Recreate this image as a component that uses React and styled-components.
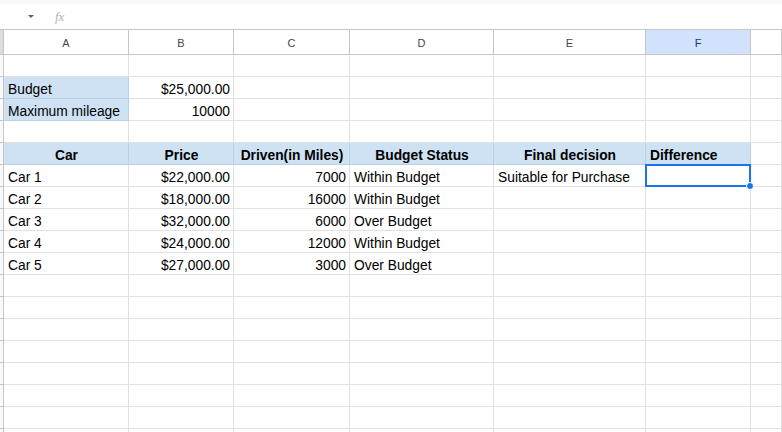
import React from "react";
import styled, { createGlobalStyle } from "styled-components";

// 스프레드시트 화면 (Budget / car list)

const GlobalStyle = createGlobalStyle`
  html, body {
    margin: 0;
    padding: 0;
    background: #ffffff;
    overflow: hidden;
  }
  body {
    font-family: "Liberation Sans", Arial, sans-serif;
  }
`;

const COLS = "4px 125px 105px 116px 144px 152px 105px 1fr";

const Page = styled.div`
  width: 782px;
  height: 432px;
  overflow: hidden;
  background: #fff;
`;

const TopStrip = styled.div`
  height: 4px;
  background: #f8f9fa;
`;

const FormulaBar = styled.div`
  height: 25px;
  display: flex;
  align-items: center;
  border-bottom: 1px solid #c4c7c5;
  padding-left: 28px;
  gap: 21px;
`;

const Caret = styled.div`
  width: 0;
  height: 0;
  border-left: 3px solid transparent;
  border-right: 3px solid transparent;
  border-top: 3px solid #5f6368;
  margin-top: -1px;
`;

const Fx = styled.span`
  font-family: "Liberation Serif", "Times New Roman", serif;
  font-style: italic;
  font-size: 13px;
  color: #b0b3b6;
  margin-top: 1px;
`;

const Row = styled.div`
  display: grid;
  grid-template-columns: ${COLS};
  height: ${(p) => (p.$head ? "25px" : "22px")};
`;

const ColHead = styled.div`
  box-sizing: border-box;
  border-right: 1px solid #c4c7c5;
  border-bottom: 1px solid #c4c7c5;
  background: ${(p) => (p.$active ? "#d3e3fd" : p.$corner ? "#dadce0" : "#fff")};
  color: ${(p) => (p.$active ? "#0b3a8a" : "#444746")};
  font-size: 11px;
  display: flex;
  align-items: center;
  justify-content: center;
  padding-top: 1px;
`;

const RowHead = styled.div`
  box-sizing: border-box;
  border-right: 1px solid #c4c7c5;
  border-bottom: 1px solid #c4c7c5;
  background: #f8f9fa;
`;

const Cell = styled.div`
  position: relative;
  box-sizing: border-box;
  border-right: 1px solid ${(p) => (p.$fill ? "#bcd0e4" : "#e1e1e1")};
  border-bottom: 1px solid ${(p) => (p.$fill ? "#bcd0e4" : "#e1e1e1")};
  background: ${(p) => (p.$fill ? "#cfe2f3" : "#fff")};
  font-size: 13.8px;
  font-weight: ${(p) => (p.$bold ? 700 : 400)};
  color: #000;
  white-space: nowrap;
  overflow: visible;
  display: flex;
  align-items: center;
  justify-content: ${(p) =>
    p.$align === "right" ? "flex-end" : p.$align === "center" ? "center" : "flex-start"};
  padding: 4px 3px 0 4px;
`;

const Selection = styled.div`
  position: absolute;
  z-index: 2;
  left: -1px;
  top: -1px;
  right: -1px;
  bottom: -1px;
  border: 2px solid #1a73e8;
  pointer-events: none;
`;

const Handle = styled.div`
  position: absolute;
  right: -5px;
  bottom: -5px;
  width: 8px;
  height: 8px;
  border-radius: 50%;
  background: #1a73e8;
  border: 1px solid #fff;
  box-sizing: border-box;
`;

const letters = ["A", "B", "C", "D", "E", "F", ""];

// 각 셀: text, align, fill, bold
const L = (t, fill, bold) => ({ t, a: "left", fill, bold });
const R = (t) => ({ t, a: "right" });
const H = (t, a = "center") => ({ t, a, fill: true, bold: true });

const rows = [
  [],
  [L("Budget", true), R("$25,000.00")],
  [L("Maximum mileage", true), R("10000")],
  [],
  [H("Car"), H("Price"), H("Driven(in Miles)"), H("Budget Status"), H("Final decision"), H("Difference", "left")],
  [L("Car 1"), R("$22,000.00"), R("7000"), L("Within Budget"), L("Suitable for Purchase"), { t: "", sel: true }],
  [L("Car 2"), R("$18,000.00"), R("16000"), L("Within Budget")],
  [L("Car 3"), R("$32,000.00"), R("6000"), L("Over Budget")],
  [L("Car 4"), R("$24,000.00"), R("12000"), L("Within Budget")],
  [L("Car 5"), R("$27,000.00"), R("3000"), L("Over Budget")],
  [], [], [], [], [], [], [], [],
];

export default function App() {
  return (
    <Page>
      <GlobalStyle />
      <TopStrip />
      <FormulaBar>
        <Caret />
        <Fx>fx</Fx>
      </FormulaBar>
      <Row $head>
        <ColHead $corner />
        {letters.map((l, i) => (
          <ColHead key={i} $active={l === "F"}>
            {l}
          </ColHead>
        ))}
      </Row>
      {rows.map((r, ri) => (
        <Row key={ri}>
          <RowHead />
          {letters.map((_, ci) => {
            const c = r[ci] || {};
            return (
              <Cell key={ci} $align={c.a} $fill={c.fill} $bold={c.bold}>
                {c.t}
                {c.sel && (
                  <Selection>
                    <Handle />
                  </Selection>
                )}
              </Cell>
            );
          })}
        </Row>
      ))}
    </Page>
  );
}
